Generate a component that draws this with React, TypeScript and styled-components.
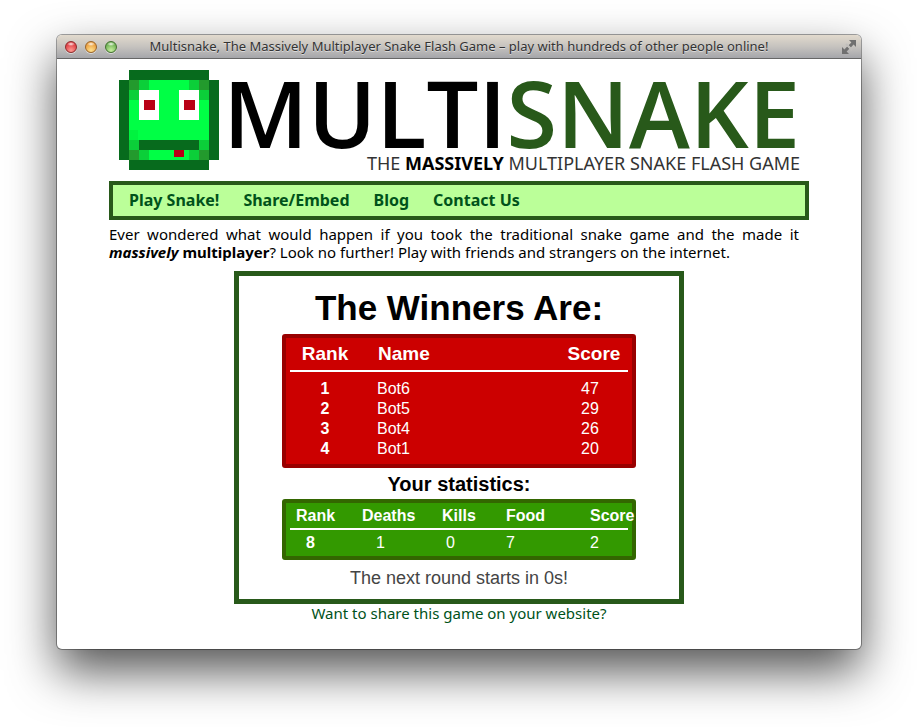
import React from "react";
import styled, { createGlobalStyle } from "styled-components";

const GlobalStyle = createGlobalStyle`
  *, *::before, *::after { box-sizing: border-box; }
  body {
    margin: 0;
    background: #fff;
    color: #000;
    font-family: "Noto Sans", "Open Sans", sans-serif;
  }
`;

const Desktop = styled.div`
  padding: 35px 56px 78px 57px;
`;

const Window = styled.div`
  border-radius: 5px;
  background: #fff;
  box-shadow: 0 0 0 1px rgba(0, 0, 0, 0.35), 0 22px 48px rgba(0, 0, 0, 0.68);
`;

const TitleBar = styled.header`
  display: grid;
  grid-template-columns: 72px 1fr 76px;
  align-items: center;
  height: 24px;
  padding: 0 4px 0 8px;
  border-bottom: 1px solid #666;
  border-radius: 5px 5px 0 0;
  background: linear-gradient(#e2dacd, #c6c3bf 50%, #a5a6aa);
`;

const Lights = styled.div`
  display: flex;
  gap: 8px;
`;

const Light = styled.button<{ $dark: string; $main: string; $glow: string }>`
  width: 12px;
  height: 12px;
  padding: 0;
  border: 1px solid ${(p) => p.$dark};
  border-radius: 50%;
  background:
    radial-gradient(ellipse 4px 2px at 50% 20%, rgba(255, 255, 255, 0.9), transparent),
    radial-gradient(circle at 50% 85%, ${(p) => p.$glow}, ${(p) => p.$main} 70%);
  box-shadow: 0 1px 0 rgba(255, 255, 255, 0.5);
`;

const WindowTitle = styled.div`
  display: flex;
  justify-content: center;
  padding-bottom: 2px;
  color: #333;
  font-size: 13px;
  line-height: 20px;
  white-space: nowrap;
  text-shadow: 0 1px 0 rgba(255, 255, 255, 0.5);
`;

const ExpandButton = styled.button`
  display: flex;
  justify-self: end;
  padding: 0;
  border: 0;
  background: none;
`;

const Page = styled.main`
  width: 100%;
  max-width: 700px;
  margin: 0 auto;
  padding: 11px 0 26px;
`;

const Banner = styled.div`
  display: flex;
  justify-content: space-between;
  align-items: flex-start;
  height: 111px;
  padding: 0 9px 0 10px;

  svg { flex: none; }
`;

const BrandText = styled.div`
  display: flex;
  flex-direction: column;
  align-items: flex-end;
`;

const Brand = styled.h1`
  margin: 0;
  color: #28591a;
  font-family: "Open Sans", sans-serif;
  font-size: 92px;
  font-weight: 600;
  line-height: 85px;
  white-space: nowrap;

  span { color: #000; }
`;

const Tagline = styled.p`
  margin: 0;
  color: #333;
  font-size: 18px;
  line-height: 16px;
  white-space: nowrap;

  strong { color: #000; }
`;

const Nav = styled.nav`
  display: flex;
  gap: 24px;
  padding: 4px 16px 5px;
  border: 4px solid #28591a;
  background: #bf9;
`;

const NavLink = styled.a`
  color: #00521a;
  font-size: 16px;
  font-weight: 700;
  line-height: 22px;
  text-decoration: none;
`;

const Intro = styled.p`
  margin: 5px 10px 10px 0;
  font-size: 15px;
  line-height: 18px;
  text-align: justify;
`;

const Game = styled.section`
  display: flex;
  flex-direction: column;
  align-items: center;
  width: 450px;
  margin: 0 auto;
  padding: 11px 0 10px;
  border: 5px solid #28591a;
  font-family: "Liberation Sans", Arial, sans-serif;
`;

const Heading = styled.h2`
  margin: 0 0 5px;
  font-size: 35px;
  line-height: 42px;
`;

const SubHeading = styled.h3`
  margin: 5px 0 3px;
  font-size: 20px;
  line-height: 23px;
`;

const Board = styled.div<{ $edge: string; $fill: string; $bottom: number }>`
  padding: 0 4px ${(p) => p.$bottom}px;
  border: 4px solid ${(p) => p.$edge};
  border-radius: 3px;
  background: ${(p) => p.$fill};
`;

const Table = styled.table`
  width: 338px;
  border-collapse: collapse;
  table-layout: fixed;
  color: #fff;
  font-size: 16px;
  white-space: nowrap;
`;

const Cell = styled.td<{ $indent?: number; $height?: number; $center?: boolean }>`
  height: ${(p) => p.$height ?? 20}px;
  padding: 0 0 0 ${(p) => p.$indent ?? 0}px;
  line-height: 20px;
  text-align: ${(p) => (p.$center ? "center" : "left")};
`;

const HeadCell = styled(Cell)<{ $size: number }>`
  border-bottom: 2px solid #fff;
  font-size: ${(p) => p.$size}px;
`;

const Spacer = styled.tbody`
  td { height: 8px; padding: 0; }
`;

const Countdown = styled.p`
  margin: 7px 0 0;
  color: #444;
  font-size: 18px;
  line-height: 22px;
`;

const ShareLink = styled.a`
  display: block;
  color: #00521a;
  font-size: 15px;
  line-height: 19px;
  text-align: center;
  text-decoration: none;
`;

const navItems = ["Play Snake!", "Share/Embed", "Blog", "Contact Us"];

const winners = [
  { rank: 1, name: "Bot6", score: 47 },
  { rank: 2, name: "Bot5", score: 29 },
  { rank: 3, name: "Bot4", score: 26 },
  { rank: 4, name: "Bot1", score: 20 },
];

const stats = [
  { label: "Rank", value: 8, width: 72, labelIndent: 6, valueIndent: 16 },
  { label: "Deaths", value: 1, width: 80, labelIndent: 0, valueIndent: 14 },
  { label: "Kills", value: 0, width: 64, labelIndent: 0, valueIndent: 4 },
  { label: "Food", value: 7, width: 84, labelIndent: 0, valueIndent: 0 },
  { label: "Score", value: 2, width: 38, labelIndent: 0, valueIndent: 0 },
];

function SnakeHead() {
  return (
    <svg width="100" height="100" viewBox="0 0 100 100" shapeRendering="crispEdges" aria-hidden="true">
      <path fill="#076b1d" d="M10 0h80v10h10v80h-10v10H10V90H0V10h10z" />
      <path fill="#00ff45" d="M10 10h80v80H10z" />
      <path fill="#0bcf39" d="M20 10h10v10H20zM70 10h10v10H70zM10 20h10v10H10zM80 20h10v10H80zM10 70h10v10H10zM80 70h10v10H80zM20 80h10v10H20zM70 80h10v10H70z" />
      <path fill="#239a2d" d="M10 10h10v10H10zM80 10h10v10H80zM10 80h10v10H10zM80 80h10v10H80z" />
      <path fill="#00f33f" d="M10 60h9v10h-9z" />
      <path fill="#fff" d="M20 20h20v30H20zM60 20h20v30H60z" />
      <path fill="#b90016" d="M25 30h11v10H25zM65 30h11v10H65zM55 80h10v7H55z" />
      <path fill="#076b1d" d="M20 70h60v10H20z" />
    </svg>
  );
}

export default function App() {
  return (
    <>
      <GlobalStyle />
      <Desktop>
        <Window>
          <TitleBar>
            <Lights>
              <Light aria-label="Close" $dark="#8e2b2b" $main="#df3f44" $glow="#ff9a92" />
              <Light aria-label="Minimize" $dark="#9a6428" $main="#eb9f3f" $glow="#ffe28f" />
              <Light aria-label="Zoom" $dark="#43702f" $main="#70b255" $glow="#c8f0a0" />
            </Lights>
            <WindowTitle>
              Multisnake, The Massively Multiplayer Snake Flash Game – play with hundreds of other people online!
            </WindowTitle>
            <ExpandButton aria-label="Full screen">
              <svg width="16" height="16" viewBox="0 0 16 16" fill="#707070" aria-hidden="true">
                <path d="M8 1h7v7l-2.4-2.4-2.8 2.8-2.2-2.2 2.8-2.8zM8 15H1V8l2.4 2.4 2.8-2.8 2.2 2.2-2.8 2.8z" />
                <path d="M5 5l6 6" stroke="#c0bebb" strokeWidth="2" />
              </svg>
            </ExpandButton>
          </TitleBar>
          <Page>
            <Banner>
              <SnakeHead />
              <BrandText>
                <Brand><span>MULTI</span>SNAKE</Brand>
                <Tagline>THE <strong>MASSIVELY</strong> MULTIPLAYER SNAKE FLASH GAME</Tagline>
              </BrandText>
            </Banner>
            <Nav>
              {navItems.map((item) => (
                <NavLink key={item} href="#">{item}</NavLink>
              ))}
            </Nav>
            <Intro>
              Ever wondered what would happen if you took the traditional snake game and the made it{" "}
              <strong><em>massively</em> multiplayer</strong>? Look no further! Play with friends and
              strangers on the internet.
            </Intro>
            <Game>
              <Heading>The Winners Are:</Heading>
              <Board $edge="#900" $fill="#c00" $bottom={5}>
                <Table>
                  <colgroup>
                    <col width="70" />
                    <col />
                    <col width="68" />
                  </colgroup>
                  <thead>
                    <tr>
                      <HeadCell as="th" $size={19} $height={33} $center>Rank</HeadCell>
                      <HeadCell as="th" $size={19} $height={33} $indent={18}>Name</HeadCell>
                      <HeadCell as="th" $size={19} $height={33} $center>Score</HeadCell>
                    </tr>
                  </thead>
                  <Spacer aria-hidden="true"><tr><td colSpan={3} /></tr></Spacer>
                  <tbody>
                    {winners.map((w) => (
                      <tr key={w.rank}>
                        <Cell as="th" $center>{w.rank}</Cell>
                        <Cell $indent={17}>{w.name}</Cell>
                        <Cell $indent={21}>{w.score}</Cell>
                      </tr>
                    ))}
                  </tbody>
                </Table>
              </Board>
              <SubHeading>Your statistics:</SubHeading>
              <Board $edge="#360" $fill="#390" $bottom={1}>
                <Table>
                  <colgroup>
                    {stats.map((s) => <col key={s.label} width={s.width} />)}
                  </colgroup>
                  <thead>
                    <tr>
                      {stats.map((s) => (
                        <HeadCell as="th" key={s.label} $size={16} $height={26} $indent={s.labelIndent}>{s.label}</HeadCell>
                      ))}
                    </tr>
                  </thead>
                  <tbody>
                    <tr>
                      {stats.map((s, i) => (
                        <Cell as={i === 0 ? "th" : "td"} key={s.label} $height={26} $indent={s.valueIndent}>{s.value}</Cell>
                      ))}
                    </tr>
                  </tbody>
                </Table>
              </Board>
              <Countdown>The next round starts in 0s!</Countdown>
            </Game>
            <ShareLink href="#">Want to share this game on your website?</ShareLink>
          </Page>
        </Window>
      </Desktop>
    </>
  );
}
